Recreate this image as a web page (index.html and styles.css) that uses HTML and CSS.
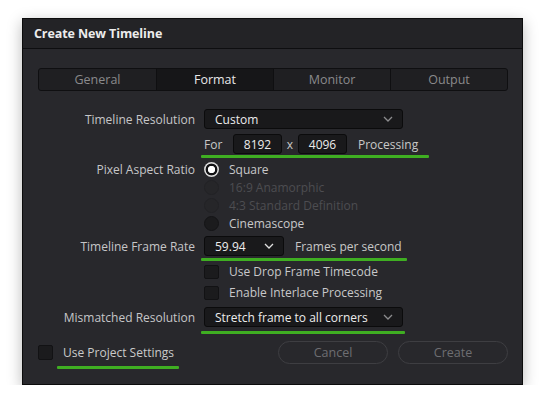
FILE: index.html
```html
<!DOCTYPE html>
<html>
<head>
<meta charset="utf-8">
<link rel="stylesheet" href="styles.css">
</head>
<body>
<div class="dialog">
  <div class="titlebar">Create New Timeline</div>
  <div class="content">
    <div class="tabs">
      <div class="tab">General</div>
      <div class="tab active">Format</div>
      <div class="tab">Monitor</div>
      <div class="tab">Output</div>
    </div>

    <div class="form">
      <div class="row r-res">
        <div class="label">Timeline Resolution</div>
        <div class="select wide"><span>Custom</span><svg class="chev dim" width="10" height="6" viewBox="0 0 10 6"><path d="M1 1 L5 5 L9 1" fill="none" stroke="currentColor" stroke-width="1.3"/></svg></div>
      </div>
      <div class="row r-for">
        <div class="label"></div>
        <div class="ctrl size">
          <span class="for">For</span>
          <span class="input">8192</span>
          <span class="x">x</span>
          <span class="input">4096</span>
          <span class="proc">Processing</span>
          <span class="mark m-for"></span>
        </div>
      </div>
      <div class="row r-radio">
        <div class="label">Pixel Aspect Ratio</div>
        <div class="ctrl"><span class="radio on"></span><span class="opt">Square</span></div>
      </div>
      <div class="row r-radio">
        <div class="label"></div>
        <div class="ctrl"><span class="radio dis"></span><span class="opt disabled">16:9 Anamorphic</span></div>
      </div>
      <div class="row r-radio">
        <div class="label"></div>
        <div class="ctrl"><span class="radio dis"></span><span class="opt disabled">4:3 Standard Definition</span></div>
      </div>
      <div class="row r-radio">
        <div class="label"></div>
        <div class="ctrl"><span class="radio"></span><span class="opt">Cinemascope</span></div>
      </div>
      <div class="row r-fps">
        <div class="label">Timeline Frame Rate</div>
        <div class="ctrl">
          <div class="select narrow"><span>59.94</span><svg class="chev" width="10" height="6" viewBox="0 0 10 6"><path d="M1 1 L5 5 L9 1" fill="none" stroke="currentColor" stroke-width="1.3"/></svg></div>
          <span class="fps">Frames per second</span>
          <span class="mark m-fps"></span>
        </div>
      </div>
      <div class="row r-check">
        <div class="label"></div>
        <div class="ctrl"><span class="check"></span><span class="opt">Use Drop Frame Timecode</span></div>
      </div>
      <div class="row r-check">
        <div class="label"></div>
        <div class="ctrl"><span class="check"></span><span class="opt">Enable Interlace Processing</span></div>
      </div>
      <div class="row r-mis">
        <div class="label">Mismatched Resolution</div>
        <div class="ctrl">
          <div class="select wide"><span>Stretch frame to all corners</span><svg class="chev dim" width="10" height="6" viewBox="0 0 10 6"><path d="M1 1 L5 5 L9 1" fill="none" stroke="currentColor" stroke-width="1.3"/></svg></div>
          <span class="mark m-mis"></span>
        </div>
      </div>
    </div>

    <div class="footer">
      <div class="proj">
        <span class="check"></span><span class="opt">Use Project Settings</span>
        <span class="mark m-proj"></span>
      </div>
      <div class="buttons">
        <div class="btn">Cancel</div>
        <div class="btn">Create</div>
      </div>
    </div>
  </div>
</div>
</body>
</html>
```

FILE: styles.css
```css
* { box-sizing: border-box; }
html, body { margin: 0; background: #ffffff; }
body {
  padding: 18px 0 0 22px;
  font-family: "Open Sans", "Noto Sans", sans-serif;
  font-size: 12px;
  color: #c8c8c8;
}
.dialog {
  width: 501px;
  height: 367px;
  background: #28282c;
  border: 1px solid #0c0c0c;
  box-shadow: 0 4px 14px rgba(0,0,0,0.28);
  display: flex;
  flex-direction: column;
}
.titlebar {
  height: 30px;
  flex: none;
  background: #232326;
  border-bottom: 1px solid #0e0e10;
  padding-left: 11px;
  display: flex;
  align-items: center;
  font-weight: 700;
  font-size: 12.5px;
  letter-spacing: -0.1px;
  color: #ececec;
}
.content {
  padding: 19px 14px 0 15px;
  display: flex;
  flex-direction: column;
}
.tabs {
  height: 23px;
  display: grid;
  grid-template-columns: repeat(4, 1fr);
  background: #1f1f22;
  border: 1px solid #0f0f11;
  border-radius: 3px;
  overflow: hidden;
}
.tab {
  display: flex;
  align-items: center;
  justify-content: center;
  color: #8a8a8c;
  font-size: 12.5px;
  border-left: 1px solid #0f0f11;
}
.tab:first-child { border-left: none; }
.tab.active { background: #161618; color: #e8e8e8; }

.form {
  margin-top: 18px;
  display: flex;
  flex-direction: column;
  margin-left: -15px;
}
.row {
  display: grid;
  grid-template-columns: 172px 1fr;
  column-gap: 9px;
  align-items: center;
}
.label { text-align: right; color: #c6c6c8; }
.ctrl { display: flex; align-items: center; position: relative; }

.r-res { height: 20px; }
.r-for { height: 20px; margin-top: 5px; }
.r-radio { height: 18px; }
.r-for + .r-radio { margin-top: 6px; }
.r-fps { height: 20px; margin-top: 4px; }
.r-check { height: 21px; }
.r-fps + .r-check { margin-top: 5px; }
.r-mis { height: 20px; margin-top: 4px; }

.select {
  height: 20px;
  background: #19191b;
  border: 1px solid #0b0b0c;
  border-radius: 3px;
  display: flex;
  align-items: center;
  justify-content: space-between;
  padding: 0 9px 0 10px;
  color: #ececec;
}
.select.wide { width: 199px; }
.select.narrow { width: 80px; }
.chev { color: #e0e0e0; display: block; }
.chev.dim { color: #8c8c8e; }

.size .for { width: 29px; color: #c8c8c8; }
.input {
  width: 49px;
  height: 20px;
  background: #19191b;
  border: 1px solid #0b0b0c;
  border-radius: 3px;
  display: flex;
  align-items: center;
  justify-content: center;
  color: #ececec;
}
.size .x { width: 16px; text-align: center; color: #c8c8c8; }
.size .proc { margin-left: 11px; }
.fps { margin-left: 11px; }

.radio {
  width: 15px;
  height: 15px;
  border-radius: 50%;
  background: #1b1b1d;
  border: 1px solid #141416;
  margin-right: 10px;
  flex: none;
}
.radio.on {
  border: none;
  background: radial-gradient(circle, #ffffff 0 3.4px, #121214 4px 5.6px, #d8d8d8 6.2px);
}
.radio.dis { background: #262629; border-color: #222225; }
.opt { color: #c8c8ca; }
.opt.disabled { color: #4d4d51; }

.check {
  width: 15px;
  height: 14px;
  background: #1b1b1d;
  border: 1px solid #121214;
  border-radius: 2px;
  margin-right: 10px;
  flex: none;
}

.mark {
  position: absolute;
  height: 3px;
  background: #3fae22;
  border-radius: 1px;
}
.m-for { left: -3px; width: 228px; top: 21px; }
.m-fps { left: -3px; width: 206px; top: 22px; }
.m-mis { left: -3px; width: 204px; top: 24px; }
.m-proj { left: 19px; width: 122px; top: 22px; }

.footer {
  margin-top: 14px;
  display: flex;
  align-items: center;
  justify-content: space-between;
  height: 23px;
}
.proj { display: flex; align-items: center; position: relative; }
.proj .check { width: 15px; height: 15px; }
.proj .opt { color: #cacaca; }
.buttons { display: flex; gap: 10px; }
.btn {
  width: 110px;
  height: 23px;
  border: 1px solid #3e3e42;
  border-radius: 12px;
  display: flex;
  align-items: center;
  justify-content: center;
  color: #6e6e72;
  font-size: 12.5px;
}
```
